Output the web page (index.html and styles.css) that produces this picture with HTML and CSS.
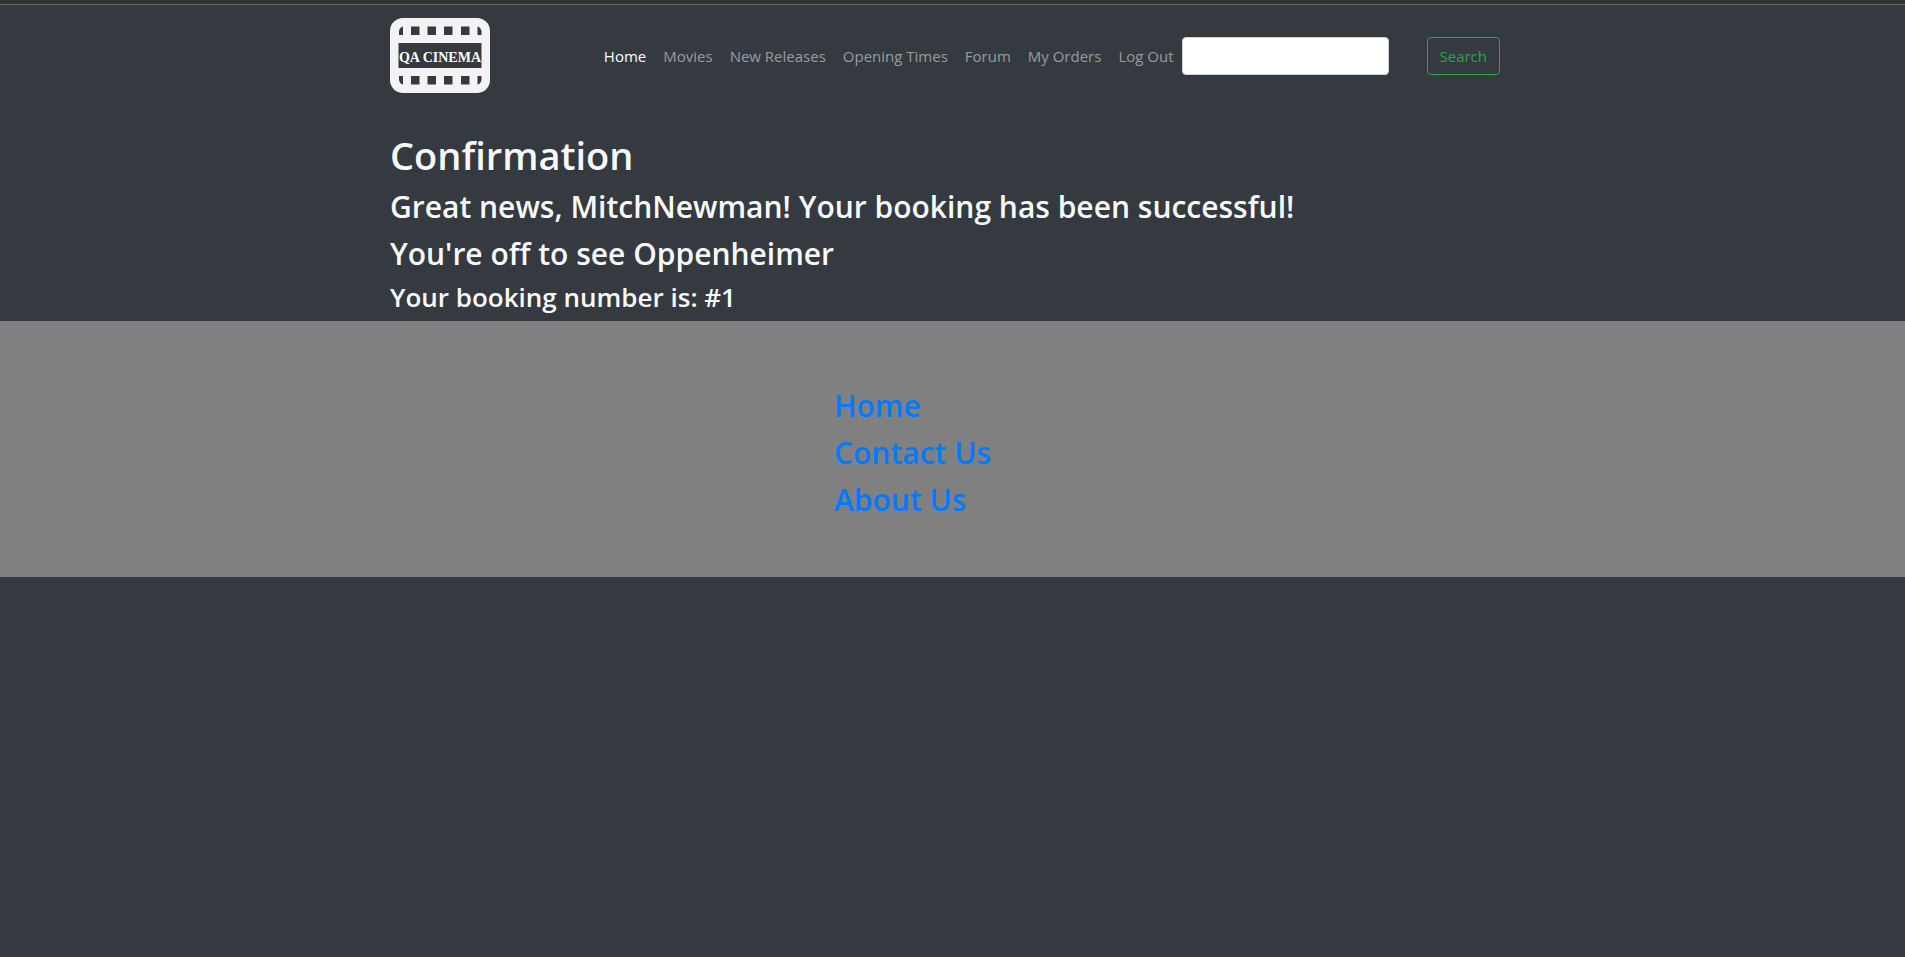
FILE: index.html
```html
<!DOCTYPE html>
<html lang="en">
<head>
  <meta charset="utf-8">
  <title>QA Cinema</title>
  <link rel="stylesheet" href="styles.css">
</head>
<body>
  <header class="site-header">
    <div class="container navbar">
      <a class="brand" href="#" aria-label="QA Cinema">
        <svg class="logo" viewBox="0 0 100 75" width="100" height="75" aria-hidden="true">
          <rect width="100" height="75" rx="13" fill="#f3f3f4"/>
          <g fill="#343a40">
            <rect x="8.500" y="25" width="83" height="25"/>
            <path d="M13 8.500v8.500H9v-4q1-4 4-4.500zM21 8.500h8.500v8.500h-8.500zM37.500 8.500h8.500v8.500h-8.500zM54 8.500h8.500v8.500h-8.500zM71 8.500h8.500v8.500h-8.500zM87.500 8.500q3 .5 4 4.500v4h-4z"/>
            <path d="M13 66.500v-8.500H9v4q1 4 4 4.500zM21 58h8.500v8.500h-8.500zM37.500 58h8.500v8.500h-8.500zM54 58h8.500v8.500h-8.500zM71 58h8.500v8.500h-8.500zM87.500 66.500q3-.5 4-4.500v-4h-4z"/>
          </g>
          <text class="logo-text" x="50" y="44" text-anchor="middle">QA CINEMA</text>
        </svg>
      </a>
      <nav class="nav-links">
        <a class="nav-link active" href="#">Home</a>
        <a class="nav-link" href="#">Movies</a>
        <a class="nav-link" href="#">New Releases</a>
        <a class="nav-link" href="#">Opening Times</a>
        <a class="nav-link" href="#">Forum</a>
        <a class="nav-link" href="#">My Orders</a>
        <a class="nav-link" href="#">Log Out</a>
      </nav>
      <form class="search">
        <input class="search-input" type="text" aria-label="Search movies">
        <button class="search-button" type="button">Search</button>
      </form>
    </div>
  </header>
  <main class="container confirmation">
    <h1>Confirmation</h1>
    <h2>Great news, MitchNewman! Your booking has been successful!</h2>
    <h2>You're off to see Oppenheimer</h2>
    <h3>Your booking number is: #1</h3>
  </main>
  <footer class="site-footer">
    <div class="container footer-links">
      <a href="#">Home</a>
      <a href="#">Contact Us</a>
      <a href="#">About Us</a>
    </div>
  </footer>
</body>
</html>
```
FILE: styles.css
```css
* { box-sizing: border-box; }

body {
  margin: 0;
  background: #343a40;
  color: #f8f9fa;
  font-family: "Open Sans", "Noto Sans", sans-serif;
  font-size: 15px;
  line-height: 24px;
}

a { text-decoration: none; }

.container {
  width: 100%;
  max-width: 1125px;
  margin: 0 auto;
}

.site-header {
  border-top: 4px solid #333333;
  box-shadow: inset 0 1px #666666;
  padding: 14px 0 13px;
}

.navbar {
  display: flex;
  align-items: center;
  padding-right: 15px;
}

.logo { display: block; }

.logo-text {
  fill: #ffffff;
  font-family: "Liberation Serif", serif;
  font-size: 14px;
  font-weight: 700;
}

.nav-links {
  display: flex;
  gap: 1px;
  margin-left: auto;
}

.nav-link {
  padding: 8px;
  color: #999c9f;
  white-space: nowrap;
}

.nav-link.active { color: #ffffff; }

.search {
  display: flex;
  gap: 38px;
}

.search-input {
  width: 207px;
  height: 38px;
  border: 1px solid #ced4da;
  border-radius: 4px;
  background: #ffffff;
  padding: 6px 12px;
  font: inherit;
}

.search-button {
  height: 38px;
  border: 1px solid #28a745;
  border-radius: 4px;
  background: transparent;
  padding: 0 12px;
  color: #28a745;
  font: inherit;
}

.confirmation { padding-top: 25px; }

h1, h2, h3 {
  margin: 0 0 8px;
  font-weight: 600;
}

h1 { font-size: 38px; line-height: 48px; }
h2 { font-size: 30px; line-height: 39px; }
h3 { font-size: 26px; line-height: 32px; }

.site-footer {
  background: #808080;
  padding: 65px 0 58px;
}

.footer-links {
  display: flex;
  flex-direction: column;
  align-items: flex-start;
  gap: 8px;
  padding-left: 444px;
  font-size: 30px;
  font-weight: 600;
  line-height: 39px;
}

.footer-links a { color: #007bff; }
```
